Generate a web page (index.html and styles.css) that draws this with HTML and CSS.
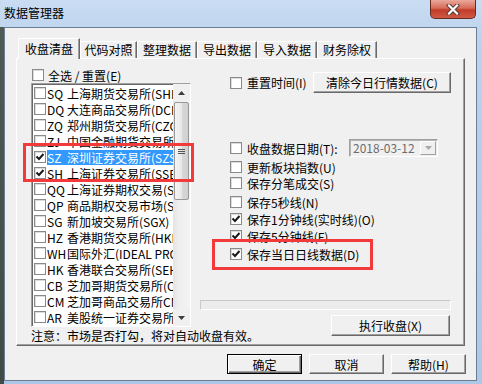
FILE: index.html
```html
<!DOCTYPE html>
<html lang="zh-CN">
<head>
  <meta charset="UTF-8" />
  <title>数据管理器</title>
  <link rel="stylesheet" href="styles.css">
</head>
<body>

<div class="window">
  <!-- Title bar -->
  <div class="titlebar">
    <div class="title">数据管理器</div>
    <div class="close">
      <svg width="14" height="11" viewBox="0 0 14 11">
        <path d="M3 1.5 L11 9.5 M11 1.5 L3 9.5" stroke="#5a3a36" stroke-width="4.2" stroke-linecap="square"/>
        <path d="M3 1.5 L11 9.5 M11 1.5 L3 9.5" stroke="#fff" stroke-width="2.2" stroke-linecap="square"/>
      </svg>
    </div>
  </div>

  <div class="client">
    <!-- Tabs -->
    <div class="tabs">
      <div class="tab active">收盘清盘</div>
      <div class="tab narrow">代码对照</div>
      <div class="tab">整理数据</div>
      <div class="tab">导出数据</div>
      <div class="tab">导入数据</div>
      <div class="tab">财务除权</div>
    </div>

    <div class="panel">
      <!-- Market list -->
      <div class="left">
        <div class="select-all"><span class="cb"></span><span>全选 / 重置(E)</span></div>
        <div class="listbox">
          <div class="items">
            <div class="item"><span class="cb"></span><span class="label"><span class="code">SQ</span>上海期货交易所(SHFE)</span></div>
            <div class="item"><span class="cb"></span><span class="label"><span class="code">DQ</span>大连商品交易所(DCE)</span></div>
            <div class="item"><span class="cb"></span><span class="label"><span class="code">ZQ</span>郑州期货交易所(CZCE)</span></div>
            <div class="item"><span class="cb"></span><span class="label"><span class="code">ZJ</span>中国金融期货交易所(CFFEX)</span></div>
            <div class="item"><span class="cb on"><svg width="10" height="10" viewBox="0 0 10 10"><path d="M1.5 4.5 L4 7 L8.5 2" fill="none" stroke="#1a1a1a" stroke-width="2"/></svg></span><span class="label selected"><span class="code">SZ</span>深圳证券交易所(SZSE)</span></div>
            <div class="item"><span class="cb on"><svg width="10" height="10" viewBox="0 0 10 10"><path d="M1.5 4.5 L4 7 L8.5 2" fill="none" stroke="#1a1a1a" stroke-width="2"/></svg></span><span class="label"><span class="code">SH</span>上海证券交易所(SSE)</span></div>
            <div class="item"><span class="cb"></span><span class="label"><span class="code">QQ</span>上海证券期权交易(SSEOPT)</span></div>
            <div class="item"><span class="cb"></span><span class="label"><span class="code">QP</span>商品期权交易市场(SHFE)</span></div>
            <div class="item"><span class="cb"></span><span class="label"><span class="code">SG</span>新加坡交易所(SGX)</span></div>
            <div class="item"><span class="cb"></span><span class="label"><span class="code">HZ</span>香港期货交易所(HKFE)</span></div>
            <div class="item"><span class="cb"></span><span class="label"><span class="code">WH</span>国际外汇(IDEAL PRO)</span></div>
            <div class="item"><span class="cb"></span><span class="label"><span class="code">HK</span>香港联合交易所(SEHK)</span></div>
            <div class="item"><span class="cb"></span><span class="label"><span class="code">CB</span>芝加哥期货交易所(CBOT)</span></div>
            <div class="item"><span class="cb"></span><span class="label"><span class="code">CM</span>芝加哥商品交易所CME</span></div>
            <div class="item"><span class="cb"></span><span class="label"><span class="code">AR</span>美股统一证券交易所</span></div>
          </div>
          <div class="scrollbar">
            <div class="sb-arrow"><svg width="7" height="4" viewBox="0 0 7 4"><path d="M0 4 L3.5 0 L7 4 Z" fill="#3c3c3c"/></svg></div>
            <div class="sb-track">
              <div class="sb-thumb"><div class="grip"></div></div>
            </div>
            <div class="sb-arrow"><svg width="7" height="4" viewBox="0 0 7 4"><path d="M0 0 L3.5 4 L7 0 Z" fill="#3c3c3c"/></svg></div>
          </div>
        </div>
        <div class="note">注意：市场是否打勾，将对自动收盘有效。</div>
      </div>

      <!-- Options -->
      <div class="right">
        <div class="check-row first">
          <span class="cb"></span><span class="txt">重置时间(I)</span>
          <div class="btn clear-btn">清除今日行情数据(C)</div>
        </div>
        <div class="check-row date-row">
          <span class="cb"></span><span class="txt date-label">收盘数据日期(T):</span>
          <div class="combo">
            <span class="combo-text">2018-03-12</span>
            <span class="combo-btn"><svg width="7" height="4" viewBox="0 0 7 4"><path d="M0 0 L3.5 4 L7 0 Z" fill="#a8a8a8"/></svg></span>
          </div>
        </div>
        <div class="check-row r-u"><span class="cb"></span><span class="txt">更新板块指数(U)</span></div>
        <div class="check-row r-s"><span class="cb"></span><span class="txt">保存分笔成交(S)</span></div>
        <div class="check-row r-n"><span class="cb"></span><span class="txt">保存5秒线(N)</span></div>
        <div class="check-row r-o"><span class="cb on"><svg width="10" height="10" viewBox="0 0 10 10"><path d="M1.5 4.5 L4 7 L8.5 2" fill="none" stroke="#1a1a1a" stroke-width="2"/></svg></span><span class="txt">保存1分钟线(实时线)(O)</span></div>
        <div class="check-row r-f"><span class="cb on"><svg width="10" height="10" viewBox="0 0 10 10"><path d="M1.5 4.5 L4 7 L8.5 2" fill="none" stroke="#1a1a1a" stroke-width="2"/></svg></span><span class="txt">保存5分钟线(F)</span></div>
        <div class="check-row r-d"><span class="cb on"><svg width="10" height="10" viewBox="0 0 10 10"><path d="M1.5 4.5 L4 7 L8.5 2" fill="none" stroke="#1a1a1a" stroke-width="2"/></svg></span><span class="txt">保存当日日线数据(D)</span></div>
        <div class="progress"></div>
        <div class="btn exec-btn">执行收盘(X)</div>
      </div>

      <!-- red highlight marks -->
      <div class="mark mark-list"></div>
      <div class="mark mark-daily"></div>
    </div>

    <div class="buttons">
      <div class="btn default">确定</div>
      <div class="btn">取消</div>
      <div class="btn">帮助(H)</div>
    </div>
  </div>
</div>

</body>
</html>
```

FILE: styles.css
```css
* { box-sizing: border-box; margin: 0; padding: 0; }
body { font-family: "Noto Sans CJK SC", sans-serif; font-size: 12px; color: #000; }

.window {
  width: 482px;
  height: 384px;
  display: flex;
  flex-direction: column;
  background:
    linear-gradient(#4f5a55, #3f4a46) 0 27px / 4px 100% no-repeat,
    linear-gradient(to bottom, #c9dcf2, #bcd2ed 40px, #adc7e6);
}

/* title bar */
.titlebar {
  height: 27px;
  display: flex;
  justify-content: space-between;
  align-items: flex-start;
}
.title { padding-left: 4px; line-height: 26px; }
.close {
  width: 46px;
  height: 19px;
  margin-right: 6px;
  border: 1px solid #6a2a22;
  border-top: none;
  border-radius: 0 0 5px 5px;
  background: linear-gradient(#eaa89b, #d66c58 45%, #c23b2a 55%, #cf5a44);
  display: flex;
  align-items: center;
  justify-content: center;
}

/* client */
.client {
  flex: 1;
  margin: 0 5px 3px 4px;
  background: #f0f0f0;
  border: 1px solid #6d7e94;
  padding: 10px 11px 0 11px;
  display: flex;
  flex-direction: column;
}

.tabs {
  display: flex;
  align-items: flex-start;
  height: 20px;
  margin-left: 2px;
}
.tab {
  width: 60px;
  height: 17px;
  margin-top: 3px;
  border: 1px solid;
  border-color: #fff #696969 transparent #fff;
  border-bottom: none;
  box-shadow: inset -1px 0 #a0a0a0;
  text-align: center;
  line-height: 16px;
}
.tab.narrow { width: 57px; }
.tab.active {
  width: 62px;
  height: 21px;
  margin-top: 0;
  line-height: 19px;
  background: #f0f0f0;
  position: relative;
  z-index: 1;
}

.panel {
  width: 449px;
  height: 288px;
  border: 1px solid;
  border-color: #fff #696969 #696969 #fff;
  box-shadow: inset -1px -1px #a0a0a0;
  position: relative;
  display: flex;
  align-items: flex-start;
  padding: 9px 0 0 14px;
}

/* checkbox */
.cb {
  flex: none;
  width: 12px;
  height: 12px;
  background: #fff;
  border: 1px solid #8a8a8a;
  box-shadow: inset 1px 1px #dcdcdc;
  display: flex;
  align-items: center;
  justify-content: center;
}

/* left column */
.left { width: 160px; display: flex; flex-direction: column; }
.select-all {
  height: 14px;
  display: flex;
  align-items: center;
  gap: 4px;
  padding-left: 1px;
}
.listbox {
  margin-top: 1px;
  height: 244px;
  display: flex;
  background: #fff;
  border: 1px solid;
  border-color: #a0a0a0 #fff #fff #a0a0a0;
  box-shadow: inset 1px 1px #696969;
}
.items { flex: 1; overflow: hidden; padding: 1px 0 0 2px; }
.item { height: 16px; display: flex; align-items: center; gap: 1px; }
.label {
  flex: 1;
  height: 15px;
  display: flex;
  align-items: center;
  white-space: nowrap;
  overflow: hidden;
}
.label.selected { background: #3399ff; color: #fff; }
.code { flex: none; width: 20px; }

.scrollbar { width: 17px; display: flex; flex-direction: column; }
.sb-arrow {
  height: 17px;
  display: flex;
  align-items: center;
  justify-content: center;
  background: #f0f0f0;
}
.sb-track {
  flex: 1;
  background: linear-gradient(to right, #e3e3e3, #eeeeee 30%, #f4f4f4);
  padding: 1px 0 0 1px;
}
.sb-thumb {
  width: 15px;
  height: 98px;
  border: 1px solid #989898;
  border-radius: 2px;
  background: linear-gradient(to right, #f5f5f5, #e8e8e8 50%, #d8d8d8 51%, #d0d0d0);
  display: flex;
  align-items: center;
  justify-content: center;
}
.grip {
  width: 7px;
  height: 5px;
  border-top: 1px solid #555;
  border-bottom: 1px solid #555;
  background: linear-gradient(#555, #555) 0 1px / 7px 1px no-repeat;
}

.note { margin-top: 2px; line-height: 14px; white-space: nowrap; }

/* right column */
.right {
  width: 251px;
  margin: 4px 0 0 9px;
  display: flex;
  flex-direction: column;
}
.check-row {
  height: 16px;
  display: flex;
  align-items: center;
  padding-left: 30px;
}
.check-row .txt { margin-left: 5px; white-space: nowrap; }
.check-row.first { height: 21px; }
.clear-btn { width: 138px; height: 21px; margin-left: auto; }
.date-row { height: 18px; margin-top: 46px; }
.date-label { width: 102px; }
.r-u { margin-top: 2px; }
.r-n { margin-top: 3px; }
.r-o, .r-f { margin-top: 1px; }
.r-d { margin-top: 2px; }

.combo {
  width: 89px;
  height: 18px;
  display: flex;
  background: #f0f0f0;
  border: 1px solid;
  border-color: #a0a0a0 #fff #fff #a0a0a0;
  box-shadow: inset 1px 1px #b5b5b5;
}
.combo-text { flex: 1; color: #6d6d6d; padding-left: 3px; line-height: 15px; }
.combo-btn {
  width: 16px;
  margin: 1px 1px 1px 0;
  border: 1px solid;
  border-color: #fff #a0a0a0 #a0a0a0 #fff;
  display: flex;
  align-items: center;
  justify-content: center;
}

.progress {
  margin-top: 38px;
  height: 10px;
  border: 1px solid;
  border-color: #c8c8c8 #fff #fff #c8c8c8;
  background: #ececec;
}

/* buttons */
.btn {
  background: #f0f0f0;
  border: 1px solid;
  border-color: #fff #696969 #696969 #fff;
  box-shadow: inset -1px -1px #a0a0a0;
  display: flex;
  align-items: center;
  justify-content: center;
  white-space: nowrap;
}
.exec-btn {
  width: 119px;
  height: 21px;
  margin-top: 5px;
  margin-right: 1px;
  align-self: flex-end;
}
.buttons {
  margin: 8px -1px 0 0;
  display: flex;
  justify-content: flex-end;
  gap: 7px;
}
.buttons .btn { width: 75px; height: 20px; }
.btn.default {
  border: 1px solid #000;
  box-shadow: inset 1px 1px #fff, inset -1px -1px #696969, inset -2px -2px #a0a0a0;
}

/* red annotation boxes */
.mark { position: absolute; border: 3px solid #f23a3a; }
.mark-list { left: 6px; top: 84px; width: 171px; height: 39px; }
.mark-daily { left: 195px; top: 180px; width: 161px; height: 31px; }
```
